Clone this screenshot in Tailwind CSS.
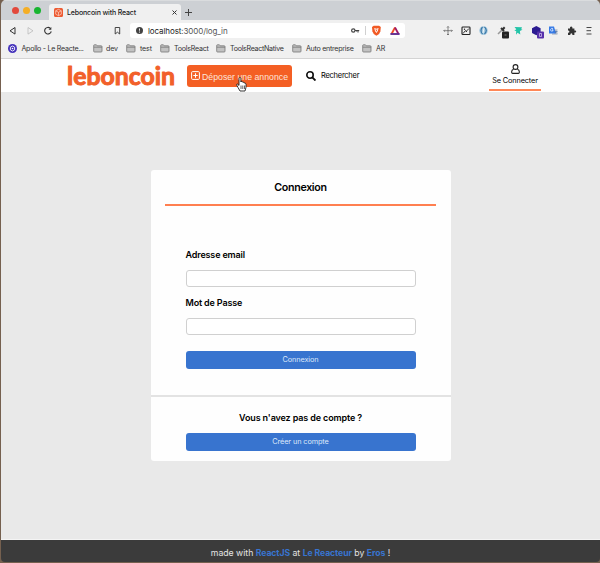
<!DOCTYPE html>
<html lang="fr">
<head>
<meta charset="utf-8">
<title>Leboncoin with React</title>
<script src="https://cdn.jsdelivr.net/npm/@tailwindcss/browser@4"></script>
</head>
<body class="w-[600px] h-[563px] overflow-hidden bg-[#75604f] font-['Inter',sans-serif] text-black">
<svg class="hidden"><defs>
<symbol id="folder" viewBox="0 0 10 9"><path d="M.7 7.200V1.500q0-.7.7-.7h2l.8 1h4q.8 0 .8.8v4.600q0 .8-.8.8H1.500q-.8 0-.8-.8Z" fill="#c2c2c2" stroke="#777" stroke-width=".8"/><path d="M.8 3.200h8.300" stroke="#777" stroke-width=".8"/></symbol>
</defs></svg>
<div class="ml-px w-[599px] h-[562px] flex flex-col rounded-t-[5px] rounded-b-[4px] overflow-hidden whitespace-nowrap">
  <div class="h-5 shrink-0 bg-[#cdd0d4] flex items-end relative border-t border-[#dadcde]">
    <div class="flex gap-[4px] pl-[11px] pb-[6px] w-12">
      <i class="size-[7px] rounded-full bg-[#e2493c]"></i><i class="size-[7px] rounded-full bg-[#f4ae25]"></i><i class="size-[7px] rounded-full bg-[#17b530]"></i>
    </div>
    <div class="w-[132px] h-4 bg-[#f0f0f0] rounded-t-[3px] flex items-center pl-[5px]">
      <svg class="size-[9px]" viewBox="0 0 9 9"><rect width="9" height="9" rx="1.500" fill="#ec5a32"/><path d="M4.500 1.300 7.300 2.800v3.400L4.500 7.700 1.700 6.200V2.800ZM1.700 2.800l2.800 1.500 2.800-1.500M4.500 4.300v3.400" fill="none" stroke="#ffd7c9" stroke-width=".7"/></svg>
      <span class="ml-1 w-[105px] text-[7px] tracking-[-.15px] leading-4 pt-px text-[#222] font-medium">Leboncoin with React</span>
      <svg class="size-[5px]" viewBox="0 0 5 5"><path d="m.5.5 4 4m0-4-4 4" stroke="#333" stroke-width="1"/></svg>
    </div>
    <svg class="ml-[4px] mb-[4px] size-[7px]" viewBox="0 0 7 7"><path d="M3.500 0v7M0 3.500h7" stroke="#444" stroke-width="1"/></svg>
  </div>

  <div class="h-[21px] shrink-0 bg-[#f0f0f0] flex items-center">
    <svg class="w-[129px] h-[21px]" viewBox="1 20 129 21" fill="none" stroke="#333">
      <path d="m15 27.500-5 3.300 5 3.300Z" stroke-width="1"/><path d="m28 27.500 5 3.300-5 3.300Z" stroke="#bbb" stroke-width=".8"/>
      <path d="M50.300 28.400a3.300 3.300 0 1 0 .9 2.900" stroke-width="1.100"/><path d="M51.300 27v2.700h-2.700Z" fill="#333" stroke="none"/>
      <path d="M115.200 27.500h4.500v6.500l-2.250-1.800-2.250 1.800Z" stroke-width=".9"/>
    </svg>
    <div class="w-[275px] h-[15px] bg-white rounded-[3px] flex items-center">
      <svg class="ml-[6px] size-[7px]" viewBox="0 0 7 7"><circle cx="3.500" cy="3.500" r="3.500" fill="#444"/><path d="M3.500 1.500v2.200M3.500 4.600v1" stroke="#fff" stroke-width=".9"/></svg>
      <span class="ml-[5px] w-[203px] text-[8px] tracking-[-.1px] leading-[15px] pt-px"><span class="text-[#222]">localhost</span><span class="text-[#555]">:3000/log_in</span></span>
      <svg class="w-[54px] h-[15px]" viewBox="351 23 54 15" fill="none">
        <circle cx="353.300" cy="30.500" r="1.700" stroke="#444" stroke-width="1.200"/><path d="M355 30.500h4.200M358 30.500v2M356.500 30.500v1" stroke="#444" stroke-width="1.100"/>
        <path d="M365.500 26v9" stroke="#bbb" stroke-width=".7"/>
        <path d="m373.700 25.700-1.700 1.300.4 4.300q.3 2.500 4 4.500 3.700-2 4-4.500l.4-4.300-1.700-1.300Z" fill="#f15a24"/><path d="m374.200 28 2.200.7 2.200-.7-.8 3-1.400 2-1.400-2Z" fill="#fff"/><path d="m375.300 29.300 1.100.5 1.100-.5-1.100 2.500Z" fill="#f15a24"/>
        <path d="m395 27.500-3.500 6.500" stroke="#f04b23" stroke-width="1.800"/><path d="m395 27.500 3.500 6.500" stroke="#9b1868" stroke-width="1.800"/><path d="M390.400 34h9.200" stroke="#642e91" stroke-width="1.900"/>
      </svg>
    </div>
    <svg class="w-[195px] h-[21px]" viewBox="405 20 195 21" fill="none">
      <path d="M448 26.500v8.500M443.800 30.700h8.500M447 27.500l1-1 1 1M447 34l1 1 1-1M444.800 29.700l-1 1 1 1M451.300 29.700l1 1-1 1" stroke="#555" stroke-width=".7"/>
      <rect x="462" y="27" width="8" height="7.500" rx=".8" stroke="#222" stroke-width="1.100"/><path d="m463 33.500 2.500-3 1.500 1.500M466 31.500l3-3" stroke="#222" stroke-width=".9"/><circle cx="464.500" cy="29.300" r=".7" fill="#222"/>
      <circle cx="483.500" cy="30.600" r="4.300" fill="#a9cbe0"/><path d="M482.500 27q-3 3.500 0 7M484.500 34q3.500-3.500 0-7" stroke="#3978a8" stroke-width="1.200"/><path d="m483 33 1-5" stroke="#fff" stroke-width=".8"/>
      <path d="m498 34 4-4" stroke="#999" stroke-width="1.600"/><path d="m501 28 3 3M502.500 29.500l2.200-2.200" stroke="#333" stroke-width="2"/><rect x="502" y="31.500" width="7" height="7" rx="1" fill="#222"/><path d="M504.500 35h2" stroke="#777"/>
      <path d="m514.500 27 7.500.3-.8 2 1.300.4-2.600 1.400.4 3.500-2.800-1.800-1.500 2 .2-3.800-1.900-.2 2-1.600Z" fill="#24c4a8"/>
      <path d="m536.300 26 4.300 2.300v4.700l-4.300 2.300-4.300-2.300v-4.700Z" fill="#2c1b91"/><rect x="537" y="31.500" width="7" height="7" rx="1" fill="#5630aa"/><path d="M539.500 33.500h2v3h-2Z" stroke="#d8cdf3" stroke-width=".7"/>
      <rect x="552" y="29" width="5.500" height="6" fill="#c6cbd2"/><path d="M549 26.500h5l2 7h-7Z" fill="#377be6"/><path d="M553 28.500q-1.700-.7-2.300.8t1 1.800 1.300-1.300h-1" stroke="#fff" stroke-width=".7"/><path d="M554.500 31.500h3M556 30.500v1l-1 2M555.500 32l1.500 1.500" stroke="#456ba8" stroke-width=".6"/>
      <path d="M568 28.500h2q-.4-2 1.200-2t1.200 2h2v2q1.800-.3 1.800 1t-1.800 1V35h-2q.1-1.700-1-1.700t-1.200 1.700H568v-2.200q1.400.1 1.400-1.100t-1.400-1.200Z" fill="#333"/>
      <path d="M586.500 27.500h5M586.500 30.700h4.500M586.500 34h5" stroke="#333" stroke-width=".9"/>
    </svg>
  </div>

  <div class="h-[18px] shrink-0 bg-[#f0f0f0] border-b border-[#d4d4d4] flex items-center text-[7.100px] tracking-[-.16px] leading-[14px] text-[#333] pl-[7px] pb-[2px]">
    <svg class="size-[9px]" viewBox="0 0 9 9"><circle cx="4.500" cy="4.500" r="4.500" fill="#4432bb"/><path d="m4.500 2 2.100 1.200v2.600L4.500 7 2.400 5.800V3.200Z" fill="none" stroke="#fff" stroke-width=".9"/><circle cx="4.500" cy="4.500" r=".8" fill="#fff"/></svg>
    <span class="ml-[4.500px] w-[71.500px] tracking-[-.27px]">Apollo - Le Reacte...</span>
    <svg class="w-[10px] h-[9px]"><use href="#folder"/></svg><span class="ml-[3px] w-5">dev</span>
    <svg class="w-[10px] h-[9px]"><use href="#folder"/></svg><span class="ml-1 w-5">test</span>
    <svg class="w-[10px] h-[9px]"><use href="#folder"/></svg><span class="ml-[4px] w-[42px] tracking-[-.25px]">ToolsReact</span>
    <svg class="w-[10px] h-[9px]"><use href="#folder"/></svg><span class="ml-[4px] w-[62px] tracking-[-.3px]">ToolsReactNative</span>
    <svg class="w-[10px] h-[9px]"><use href="#folder"/></svg><span class="ml-[4px] w-[56px] tracking-[-.27px]">Auto entreprise</span>
    <svg class="w-[10px] h-[9px]"><use href="#folder"/></svg><span class="ml-[4px]">AR</span>
  </div>

  <header class="h-[33px] shrink-0 bg-white flex items-center relative">
    <svg class="ml-[65px] w-[112px] h-[33px] shrink-0" viewBox="66 59 112 33"><text x="67" y="84.500" textLength="108" lengthAdjust="spacingAndGlyphs" class="font-['Lato',sans-serif] font-bold text-[25px]" fill="#f2602a" stroke="#f2602a" stroke-width="1" stroke-linejoin="round">leboncoin</text></svg>
    <div class="ml-[9px] w-[105px] h-[22px] shrink-0 rounded-[3px] bg-[#f45f24] flex items-center text-[#fbe3d8]">
      <svg class="ml-[4px] size-[9px] shrink-0" viewBox="0 0 9 9" fill="none" stroke="#fff"><rect x=".6" y=".6" width="7.800" height="7.800" rx="1"/><path d="M4.500 2.300v4.400M2.300 4.500h4.400" stroke-width="1.100"/></svg>
      <svg class="ml-[2px] w-[88px] h-[22px] shrink-0 overflow-visible"><text x="0" y="14.500" textLength="86" lengthAdjust="spacingAndGlyphs" font-family="Liberation Sans, Arial, sans-serif" font-size="9.500" fill="#fde5da">Déposer une annonce</text></svg>
    </div>
    <svg class="ml-[14px] size-[10px] shrink-0" viewBox="0 0 10 10" fill="none" stroke="#111"><circle cx="4" cy="4" r="3.200" stroke-width="1.600"/><path d="m6.300 6.300 3.200 3.200" stroke-width="1.900"/></svg>
    <span class="ml-[5px] w-[168px] text-[7.500px] tracking-[-.26px] leading-4 pt-px">Rechercher</span>
    <div class="w-[52px] h-[33px] pt-[5px] pb-px flex flex-col items-center">
      <svg class="w-[9px] h-[10px] shrink-0" viewBox="0 0 9 10" fill="none" stroke="#222" stroke-width="1.100"><circle cx="4.500" cy="3" r="2.400"/><path d="M2.600 5.200Q.7 5.700.7 7.500v1q0 .9.900.9h5.800q.9 0 .9-.9v-1q0-1.800-1.900-2.300"/></svg>
      <span class="mt-[2px] text-[7.300px] tracking-[-.12px] leading-[10px]">Se Connecter</span>
      <i class="mt-auto w-[52px] h-[2px] shrink-0 bg-[#ff8757]"></i>
    </div>
    <svg class="absolute left-[235px] top-[18px] w-[11px] h-[15px]" viewBox="0 0 11 15"><path d="M3 1.500q0-1 .9-1t1 1V5l.2-.6q1.400-.3 1.600.8 1.300-.4 1.600.8 1.500-.2 1.700 1.300v3L9 14H4L2 10.500.8 8.200Q.3 7 1.400 7L3 8.400Z" fill="#fff" stroke="#222" stroke-width=".9"/><path d="M5 8.500V12M6.800 8.500V12M8.500 8.500V12" stroke="#222" stroke-width=".7"/></svg>
  </header>

  <main class="flex-1 bg-[#e9e9e9] pt-[78px] pl-[149.500px] border-b border-[#f4f4f4]">
    <div class="w-[300px] h-[291px] rounded-[3px] bg-[#fefefe] flex flex-col items-center">
      <h1 class="mt-[10px] text-[10.700px] tracking-[-.35px] leading-4 font-semibold">Connexion</h1>
      <div class="mt-[8px] w-[271px] h-[1.500px] bg-[#ff7f50]"></div>
      <form class="w-[230px] mt-[43.500px] flex flex-col text-[9px] tracking-[-.16px] font-semibold">
        <label class="leading-3">Adresse email</label>
        <input class="mt-[9px] h-[17px] border border-[#d0d0d0] rounded-[3px] bg-white">
        <label class="mt-[10px] leading-3">Mot de Passe</label>
        <input class="mt-[9px] h-[17px] border border-[#d0d0d0] rounded-[3px] bg-white">
        <button type="button" class="mt-[16px] h-[18px] pt-px rounded-[3px] bg-[#3874cf] text-[#dce8fa] text-[7.300px] tracking-[-.1px] font-normal">Connexion</button>
      </form>
      <div class="mt-[26px] w-full h-[1.500px] bg-[#e3e3e3] shrink-0"></div>
      <h2 class="mt-[13.500px] text-[9px] tracking-[-.13px] leading-4 font-semibold">Vous n'avez pas de compte ?</h2>
      <button class="mt-[7px] w-[230px] h-[18px] pt-px shrink-0 rounded-[3px] bg-[#3874cf] text-[#dce8fa] text-[7.300px] tracking-[-.1px]">Créer un compte</button>
    </div>
  </main>
  <footer class="h-[22px] shrink-0 bg-[#3b3b3b] text-[#e5e5e5] text-[8.700px] leading-[27px] text-center"><span>made with <b class="font-bold tracking-[-.1px] text-[#3874cf]">ReactJS</b> at <b class="font-bold tracking-[-.1px] text-[#3874cf]">Le Reacteur</b> by <b class="font-bold tracking-[-.1px] text-[#3874cf]">Eros</b> !</span></footer>
</div>
</body>
</html>
